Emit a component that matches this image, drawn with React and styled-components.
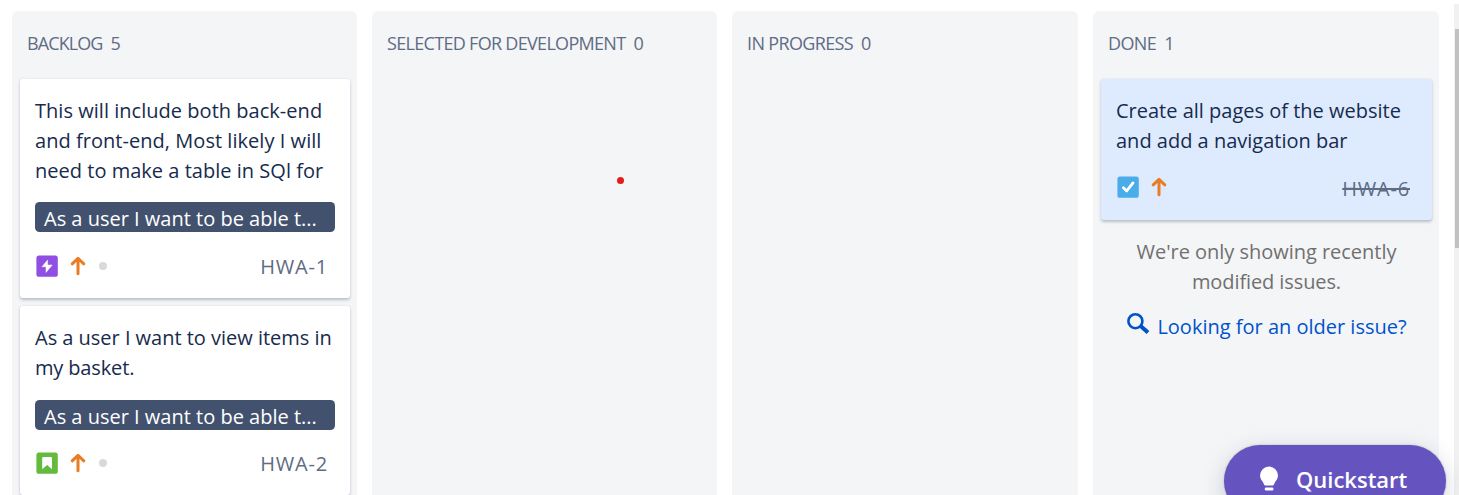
import React from 'react';
import styled, { createGlobalStyle } from 'styled-components';

const GlobalStyle = createGlobalStyle`
  *, *::before, *::after { box-sizing: border-box; }
  html, body { margin: 0; background: #fff; overflow: hidden; }
  body {
    font-family: 'Segoe UI', 'Open Sans', 'Noto Sans', sans-serif;
    font-size: 20px;
    line-height: 30px;
    color: #172b4d;
  }
`;

const Page = styled.div`
  position: relative;
  display: flex;
  height: 495px;
  overflow: hidden;
`;

const Board = styled.main`
  flex: 1;
  display: grid;
  grid-template-columns: 345px 345px 346px 346px;
  gap: 15px;
  padding: 11px 15px 0 12px;
`;

const Column = styled.section`
  min-width: 0;
  display: flex;
  flex-direction: column;
  padding: 0 7px 0 8px;
  border-radius: 6px 6px 0 0;
  background: #f4f5f7;
`;

const ColumnHeader = styled.h2`
  display: flex;
  flex-shrink: 0;
  gap: 8px;
  height: 68px;
  margin: 0;
  padding: 17px 7px 0;
  font-size: 18px;
  font-weight: 400;
  color: #5e6c84;
  white-space: nowrap;
`;

const Text = styled.span`
  display: block;
  white-space: nowrap;
  letter-spacing: ${({ $track = 0 }) => $track}px;
`;

const CardList = styled.div`
  display: flex;
  flex-direction: column;
  gap: 8px;
`;

const Card = styled.article`
  padding: 17px 15px ${({ $highlighted }) => ($highlighted ? 15 : 14)}px;
  border-radius: 3px;
  background: ${({ $highlighted }) => ($highlighted ? '#deebff' : '#fff')};
  box-shadow: 0 1.5px 3px rgba(9, 30, 66, 0.25);
`;

const Epic = styled.div`
  height: 30px;
  margin-top: ${({ $gap }) => $gap}px;
  padding: 2px 8px 0 9px;
  border-radius: 4.5px;
  background: #42526e;
  color: #fff;
  line-height: 29px;
`;

const CardFooter = styled.footer`
  display: flex;
  align-items: center;
  height: 36px;
  margin-top: ${({ $gap = 13 }) => $gap}px;
`;

const Arrow = styled.svg`
  width: 24px;
  height: 24px;
  margin-left: 7px;
`;

const Estimate = styled.span`
  width: 8px;
  height: 8px;
  margin-left: 9px;
  border-radius: 50%;
  background: #d9d9d9;
`;

const IssueKey = styled.span`
  margin-left: auto;
  margin-right: 7px;
  padding-top: ${({ $done }) => ($done ? 3 : 1)}px;
  color: #5e6c84;
  letter-spacing: 0.8px;
  text-decoration: ${({ $done }) => ($done ? 'line-through' : 'none')};
`;

const Notice = styled.p`
  margin: 17px 0 0;
  text-align: center;
  color: #707070;
`;

const OlderLink = styled.a`
  display: flex;
  justify-content: center;
  gap: 7px;
  margin-top: 15px;
  color: #0052cc;
`;

const SearchIcon = styled.svg`
  width: 24px;
  height: 24px;
`;

const ScrollTrack = styled.div`
  width: 5px;
  margin-top: 4px;
  padding: 25px 0 0 1px;
  background: #f1f1f1;
`;

const ScrollThumb = styled.div`
  height: 219px;
  background: #c1c1c1;
`;

const Quickstart = styled.button`
  position: absolute;
  left: 1224px;
  top: 445px;
  display: flex;
  align-items: center;
  gap: 16px;
  width: 222px;
  height: 72px;
  padding: 0 0 4px 34px;
  border: 0;
  border-radius: 36px;
  background: #6554c0;
  color: #fff;
  font: 600 22px/30px 'Segoe UI', 'Open Sans', sans-serif;
  box-shadow: 0 6px 24px -3px rgba(23, 43, 77, 0.28), 0 0 1.5px rgba(23, 43, 77, 0.4);
`;

const BulbIcon = styled.svg`
  width: 22px;
  height: 26px;
`;

const Pointer = styled.i`
  position: absolute;
  left: 617px;
  top: 177px;
  width: 7px;
  height: 7px;
  border-radius: 50%;
  background: #e81919;
`;

const typeColors = { epic: '#904ee2', story: '#63ba3c', task: '#4bade8' };

function TypeIcon({ type }) {
  return (
    <svg width="24" height="24" viewBox="0 0 24 24">
      <rect x="1.4" y="1.4" width="21.4" height="21.4" rx="2.6" fill={typeColors[type]} />
      {type === 'epic' && (
        <path d="M12.6 6 L7 12.8 H11 V18.4 L17.2 11 H12.6 Z" fill="#fff" stroke="#fff" strokeWidth=".5" strokeLinejoin="round" />
      )}
      {type === 'story' && (
        <path d="M7.2 7.2 Q7.2 6 8.4 6 H15.8 Q17 6 17 7.2 V18.2 L12.1 14 L7.2 18.2 Z" fill="#fff" />
      )}
      {type === 'task' && (
        <path d="M7.4 12.7 L10.7 15.9 L17 7.9" fill="none" stroke="#fff" strokeWidth="2.8" strokeLinecap="round" strokeLinejoin="round" />
      )}
    </svg>
  );
}

function Priority() {
  return (
    <Arrow viewBox="0 0 24 24">
      <path d="M12 19.8 V4.6 M6.2 9.8 L12 4.3 L17.8 9.8" fill="none" stroke="#ea7d24" strokeWidth="3" strokeLinecap="round" strokeLinejoin="round" />
    </Arrow>
  );
}

function Issue({ lines, epic, epicGap, footerGap, type, issueKey, done }) {
  return (
    <Card $highlighted={done}>
      {lines.map(([text, track]) => (
        <Text key={text} $track={track}>{text}</Text>
      ))}
      {epic && (
        <Epic $gap={epicGap}>
          <Text>{epic}</Text>
        </Epic>
      )}
      <CardFooter $gap={footerGap}>
        <TypeIcon type={type} />
        <Priority />
        {epic && <Estimate />}
        <IssueKey $done={done}>{issueKey}</IssueKey>
      </CardFooter>
    </Card>
  );
}

function BoardColumn({ title, track, count, children }) {
  return (
    <Column>
      <ColumnHeader>
        <Text $track={track}>{title}</Text>
        <Text>{count}</Text>
      </ColumnHeader>
      {children}
    </Column>
  );
}

export default function App() {
  return (
    <>
      <GlobalStyle />
      <Page>
        <Board>
          <BoardColumn title="BACKLOG" track={-0.9} count={5}>
            <CardList>
              <Issue
                lines={[
                  ['This will include both back-end', 0.03],
                  ['and front-end, Most likely I will', 0.04],
                  ['need to make a table in SQl for', 0.02],
                ]}
                epic="As a user I want to be able t..."
                epicGap={16}
                footerGap={16}
                type="epic"
                issueKey="HWA-1"
              />
              <Issue
                lines={[
                  ['As a user I want to view items in', -0.02],
                  ['my basket.', -0.15],
                ]}
                epic="As a user I want to be able t..."
                epicGap={17}
                footerGap={15}
                type="story"
                issueKey="HWA-2"
              />
            </CardList>
          </BoardColumn>
          <BoardColumn title="SELECTED FOR DEVELOPMENT" track={-0.69} count={0} />
          <BoardColumn title="IN PROGRESS" track={-0.65} count={0} />
          <BoardColumn title="DONE" track={-0.6} count={1}>
            <CardList>
              <Issue
                lines={[
                  ['Create all pages of the website', 0],
                  ['and add a navigation bar', 0],
                ]}
                type="task"
                issueKey="HWA-6"
                done
              />
            </CardList>
            <Notice>
              <Text $track={-0.03}>We're only showing recently</Text>
              <Text $track={-0.1}>modified issues.</Text>
            </Notice>
            <OlderLink>
              <SearchIcon viewBox="0 0 24 24">
                <circle cx="9.4" cy="9.2" r="7" fill="none" stroke="currentColor" strokeWidth="2.6" />
                <path d="M14.6 14 L22 20.6" stroke="currentColor" strokeWidth="4" />
              </SearchIcon>
              <Text>Looking for an older issue?</Text>
            </OlderLink>
          </BoardColumn>
        </Board>
        <ScrollTrack>
          <ScrollThumb />
        </ScrollTrack>
        <Pointer />
        <Quickstart>
          <BulbIcon viewBox="0 0 22 26">
            <path d="M11 .6 A9 9 0 0 0 2 9.6 C2 13.2 4.2 14.8 5.4 17 C6 18.2 6.2 19.6 7.2 19.6 H14.8 C15.8 19.6 16 18.2 16.6 17 C17.8 14.8 20 13.2 20 9.6 A9 9 0 0 0 11 .6 Z" fill="#fff" />
            <rect x="6.8" y="21.4" width="8.6" height="3" rx="1.2" fill="#fff" />
          </BulbIcon>
          <Text>Quickstart</Text>
        </Quickstart>
      </Page>
    </>
  );
}
